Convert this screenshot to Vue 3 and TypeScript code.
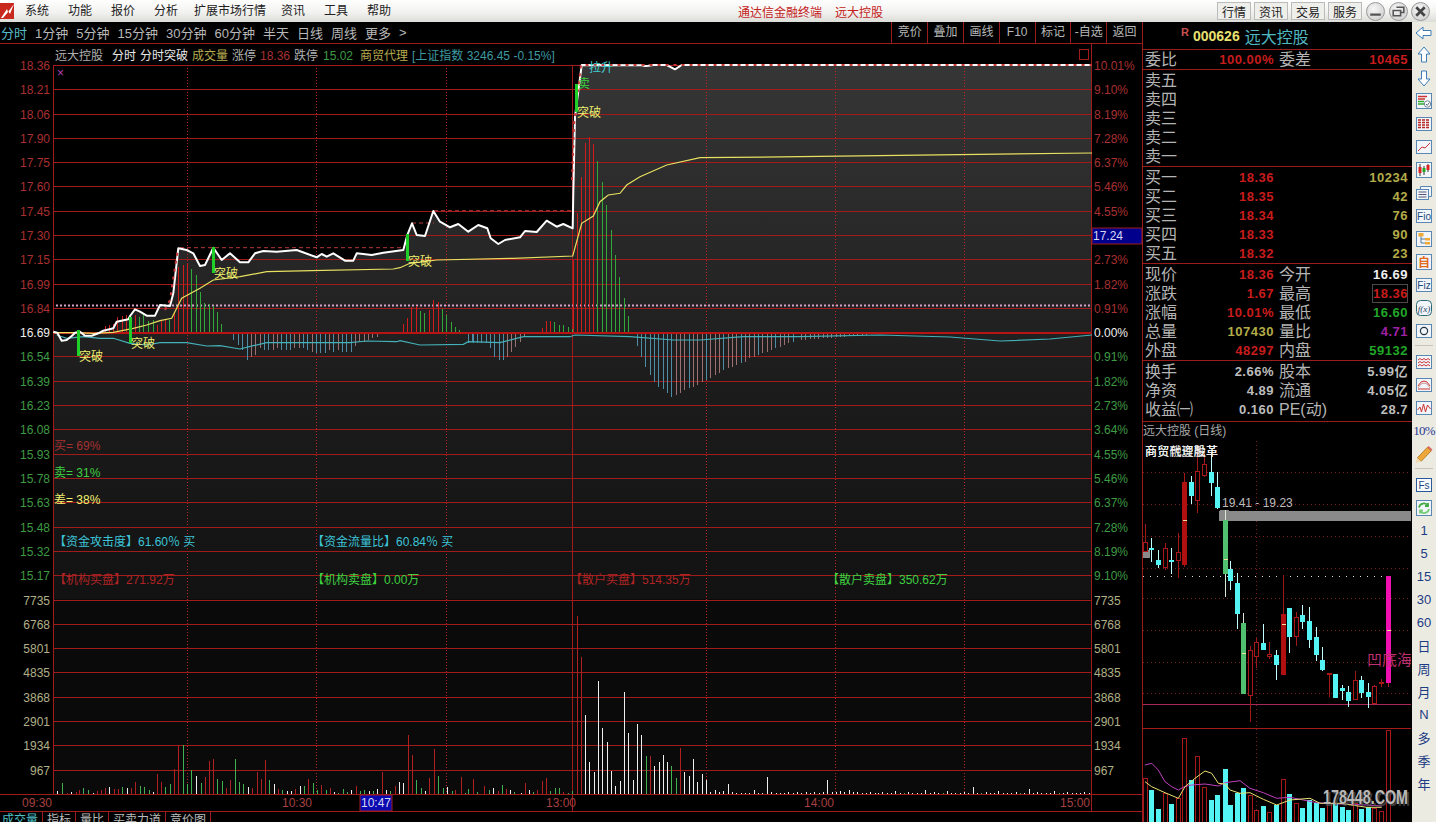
<script setup lang="ts">
type P = [number, number];
type Col = "r" | "g" | "w";
type VolBar = { x: number; top: number; c: Col };

const z5 = (p: P): P => [p[0] / 3, 200 + p[1] / 3];
const z6 = (p: P): P => [400 + p[0] / 3, 50 + p[1] / 3];
const path = (pts: P[]) => pts.map((p, i) => `${i ? "L" : "M"}${p[0].toFixed(1)} ${p[1].toFixed(1)}`).join(" ");
const snap = (x: number) => Math.round(x) + 0.5;

const menus = ["系统", "功能", "报价", "分析", "扩展市场行情", "资讯", "工具", "帮助"];
const periods = ["分时", "1分钟", "5分钟", "15分钟", "30分钟", "60分钟", "半天", "日线", "周线", "更多", ">"];
const tools = ["竞价", "叠加", "画线", "F10", "标记", "-自选", "返回"];
const tabs = ["成交量", "指标", "量比", "买卖力道", "竞价图"];

const step = 24.29;
const priceLabels = ["18.36","18.21","18.06","17.90","17.75","17.60","17.45","17.30","17.15","16.99","16.84","16.69","16.54","16.39","16.23","16.08","15.93","15.78","15.63","15.48","15.32","15.17"];
const pctLabels = ["10.01%","9.10%","8.19%","7.28%","6.37%","5.46%","4.55%","","2.73%","1.82%","0.91%","0.00%","0.91%","1.82%","2.73%","3.64%","4.55%","5.46%","6.37%","7.28%","8.19%","9.10%"];
const priceRows = priceLabels.map((label, i) => ({
  label,
  pct: pctLabels[i],
  y: 65 + i * step,
  cls: i < 11 ? "up" : i === 11 ? "flat" : "down",
}));
const volRows = ["7735","6768","5801","4835","3868","2901","1934","967"].map((label, i) => ({ label, y: 599.5 + i * 24.3 }));
const vDots = [187.5, 316.5, 446.5, 706.5, 835.5, 964.5];
const times = [
  { t: "09:30", x: 22 }, { t: "10:30", x: 282 }, { t: "13:00", x: 546 }, { t: "14:00", x: 804 }, { t: "15:00", x: 1060 },
];

const priceLine: P[] = [
  ...([[160,395],[172,398],[185,422],[200,420],[215,408],[225,398],[240,395],[255,407],[275,407],[295,400],[310,392],[340,385],[350,365],[385,358],[392,345],[405,328],[420,335],[440,347],[465,347],[480,315],[510,318],[520,280],[535,145],[560,150],[580,160],[600,198],[615,195],[640,143],[665,180],[690,160],[720,187],[745,187],[765,160],[790,153],[830,155],[890,150],[950,172],[965,162],[980,170],[1000,160],[1035,182],[1060,182],[1070,160],[1115,165],[1150,158],[1210,150]] as P[]).map(z5),
  ...([[22,555],[36,520],[50,555],[75,558],[100,483],[120,515],[150,532],[175,522],[205,545],[235,525],[262,535],[272,565],[295,582],[315,570],[360,562],[375,543],[410,546],[440,512],[470,530],[490,522],[518,535],[520,430],[525,200],[545,45],[725,46],[735,48],[745,47],[760,45],[800,45],[825,58],[845,45],[1200,45]] as P[]).map(z6),
  [1092, 65],
];
const pricePath = path(priceLine);
const areaPath = `${pricePath} L1092 599 L53 599 Z`;

const avgLine = path([
  ...([[160,398],[230,398],[280,400],[340,397],[400,385],[440,375],[480,362],[515,355],[545,295],[600,265],[640,240],[720,230],[800,215],[935,212],[1180,207],[1200,203]] as P[]).map(z5),
  ...([[30,640],[110,630],[340,625],[518,618],[545,520],[580,498],[600,455],[625,435],[660,430],[680,405],[720,380],[800,345],[900,323],[1200,320]] as P[]).map(z6),
  [1092, 153],
]);
const cyanLine = path([
  ...([[170,405],[200,415],[250,410],[300,415],[340,415],[390,430],[440,435],[480,428],[560,428],[620,438],[660,437],[720,447],[760,437],[800,428],[1050,428],[1100,423],[1190,425]] as P[]).map(z5),
  ...([[0,872],[60,885],[190,883],[205,875],[300,878],[370,860],[510,860],[525,855],[690,860],[820,870],[900,870],[1030,860],[1200,860]] as P[]).map(z6),
  [880, 335], [950, 337], [1000, 341], [1050, 339], [1092, 335],
]);

type Bar = { x: number; y1: number; y2: number; cls: string };
const zero = 333;
const upBars: Bar[] = [];
const addUp = (zp: (p: P) => P, list: [number, number, string][]) =>
  list.forEach(([x, y, c]) => {
    const p = zp([x, y]);
    upBars.push({ x: snap(p[0]), y1: zero, y2: p[1], cls: c === "r" ? "bar-red" : "bar-green" });
  });
addUp(z5, [[315,378,"r"],[328,375,"r"],[340,372,"r"],[352,350,"r"],[365,347,"r"],[378,345,"r"],[405,345,"r"],[418,350,"g"],[430,345,"g"],[445,362,"g"],[460,360,"g"],[470,375,"r"],[483,360,"r"],[496,360,"r"],[508,360,"g"],[522,340,"r"],[535,200,"r"],[548,195,"r"],[561,190,"r"],[574,207,"g"],[587,225,"g"],[600,275,"g"],[613,310,"g"],[626,312,"g"],[640,318,"g"],[652,335,"g"],[664,372,"g"],[1208,372,"r"],[1221,355,"r"],[1234,320,"r"],[1247,318,"r"],[1260,333,"g"],[1273,340,"g"],[1287,330,"r"],[1300,300,"r"],[1313,305,"r"],[1326,328,"g"],[1339,345,"g"],[1352,365,"g"],[1365,380,"g"],[1378,390,"g"]]);
addUp(z6, [[425,835,"r"],[438,812,"r"],[451,812,"r"],[463,816,"g"],[477,825,"g"],[490,825,"g"],[503,832,"g"],[516,838,"g"],[518,630,"r"],[531,490,"r"],[542,380,"r"],[555,280,"r"],[568,262,"r"],[580,282,"r"],[592,332,"g"],[606,395,"g"],[619,465,"g"],[632,540,"g"],[646,615,"g"],[658,680,"g"],[671,745,"g"],[685,798,"g"]]);

const downBars: Bar[] = [];
const firstDown: [number, number, string][] = [[700,420,"b"],[715,435,"b"],[727,450,"b"],[740,480,"b"],[753,470,"p"],[766,465,"p"],[779,445,"p"],[792,450,"b"],[805,450,"b"],[818,450,"p"],[831,445,"p"],[844,450,"b"],[857,450,"b"],[870,450,"b"],[883,445,"p"],[896,445,"p"],[909,445,"b"],[922,450,"b"],[935,455,"p"],[948,460,"b"],[961,458,"b"],[974,458,"b"],[987,450,"p"],[1000,455,"b"],[1013,450,"p"],[1026,455,"b"],[1039,455,"b"],[1052,455,"b"],[1065,437,"p"],[1078,425,"p"],[1091,425,"p"],[1104,420,"p"],[1117,415,"p"],[1130,410,"p"],[1404,425,"b"],[1417,425,"b"],[1430,425,"b"]];
firstDown.forEach(([x, y, c]) => {
  const p = z5([x, y]);
  downBars.push({ x: snap(p[0]), y1: zero + 1, y2: p[1], cls: c === "b" ? "bar-blue" : "bar-pink" });
});
const midDown: [number, number, string][] = [[205,880,"b"],[218,880,"b"],[231,880,"b"],[244,880,"b"],[257,880,"b"],[270,895,"b"],[283,920,"b"],[296,930,"b"],[309,930,"b"],[320,920,"p"],[333,905,"p"],[346,890,"p"],[360,875,"p"],[373,860,"p"],[710,888,"b"],[723,920,"b"],[736,950,"b"],[749,975,"b"],[762,995,"b"],[775,1010,"b"],[788,1018,"b"],[801,1030,"b"],[814,1040,"b"]];
midDown.forEach(([x, y, c]) => {
  const p = z6([x, y]);
  downBars.push({ x: snap(p[0]), y1: zero + 1, y2: p[1], cls: c === "b" ? "bar-blue" : "bar-pink" });
});
[1035,1030,1020,1015,1010,1005,995,990,985,975,970,960,955,950,945,940,935,925,920,915,910,905,900,895,890,885,880,875].forEach((y, i) => {
  const p = z6([827 + i * 13, y]);
  downBars.push({ x: snap(p[0]), y1: zero + 1, y2: p[1], cls: i % 4 === 3 ? "bar-blue" : "bar-pink" });
});
[6, 6, 5, 5, 5, 4, 4, 4, 3, 3, 3, 2, 2, 2, 1, 1].forEach((d, i) => {
  downBars.push({ x: snap(801 + i * 4.33), y1: zero + 1, y2: zero + 1 + d, cls: "bar-pink" });
});

const volBars: VolBar[] = [];
const z7: [number, number, Col][] = [[172,272,"w"],[187,250,"g"],[200,278,"r"],[212,276,"w"],[227,275,"r"],[238,270,"r"],[250,265,"g"],[265,270,"g"],[278,278,"w"],[290,273,"r"],[303,270,"r"],[316,265,"r"],[328,262,"w"],[343,268,"r"],[355,266,"r"],[367,262,"g"],[382,264,"w"],[394,265,"r"],[406,247,"r"],[421,258,"g"],[433,262,"g"],[446,270,"g"],[458,276,"w"],[472,222,"r"],[484,247,"r"],[496,262,"g"],[511,252,"g"],[523,208,"r"],[535,137,"r"],[550,135,"g"],[562,252,"g"],[574,210,"g"],[589,228,"w"],[602,250,"g"],[614,232,"r"],[628,183,"r"],[640,178,"r"],[652,238,"g"],[667,243,"g"],[679,265,"r"],[691,240,"r"],[706,178,"g"],[718,247,"g"],[730,252,"g"],[745,260,"w"],[757,265,"r"],[770,217,"r"],[784,238,"r"],[796,181,"r"],[808,240,"g"],[823,252,"w"],[835,266,"r"],[847,270,"g"],[862,274,"w"],[874,272,"w"],[886,266,"r"],[901,258,"w"],[913,258,"g"],[925,238,"r"],[940,250,"g"],[952,270,"g"],[964,254,"r"],[977,270,"g"],[991,265,"r"],[1003,277,"w"],[1015,279,"g"],[1030,267,"g"],[1042,276,"g"],[1054,270,"w"],[1069,258,"r"],[1081,273,"g"],[1093,270,"g"],[1108,274,"w"],[1120,273,"g"],[1132,266,"w"],[1147,217,"r"],[1159,270,"w"],[1171,274,"g"],[1186,258,"r"],[1198,246,"w"],[1210,248,"w"],[1225,105,"r"],[1237,165,"r"],[1249,240,"g"],[1264,264,"g"],[1276,273,"w"],[1288,235,"r"],[1303,148,"r"],[1315,228,"g"],[1328,263,"g"],[1342,261,"w"],[1355,273,"g"],[1366,270,"r"],[1382,232,"r"],[1394,278,"g"],[1405,267,"g"],[1419,237,"r"],[1431,277,"g"]];
z7.forEach(([x, y, c]) => volBars.push({ x: x / 3, top: 700 + y / 3, c }));
([[484,786,"r"],[489,790,"g"],[493,788,"w"],[498,791,"r"],[502,785,"g"],[506,789,"r"],[510,790,"w"],[514,792,"g"]] as [number, number, Col][]).forEach(([x, top, c]) => volBars.push({ x, top, c }));
const z8: [number, number, Col][] = [[2,578,"w"],[14,550,"r"],[28,570,"w"],[40,576,"g"],[52,571,"r"],[67,543,"r"],[79,534,"r"],[91,573,"g"],[106,564,"g"],[118,564,"g"],[130,577,"r"],[144,579,"g"],[157,573,"g"],[170,48,"r"],[184,172,"r"],[196,345,"w"],[208,486,"w"],[223,516,"w"],[235,243,"w"],[247,385,"w"],[262,427,"w"],[274,513,"w"],[286,558,"w"],[301,543,"w"],[313,276,"w"],[325,399,"w"],[340,540,"w"],[352,372,"w"],[364,405,"w"],[379,468,"g"],[391,468,"r"],[403,498,"w"],[418,486,"w"],[430,465,"w"],[442,486,"w"],[454,498,"g"],[469,534,"g"],[481,444,"r"],[493,516,"w"],[508,528,"w"],[520,477,"w"],[532,546,"w"],[547,522,"w"],[559,540,"w"],[571,576,"w"],[586,570,"w"],[598,576,"w"],[610,573,"w"],[625,552,"w"],[637,576,"w"],[649,579,"w"],[664,579,"w"],[676,579,"w"],[688,579,"w"],[703,570,"w"],[715,579,"w"],[727,579,"w"],[742,531,"w"],[754,576,"w"],[769,579,"w"],[781,579,"w"],[793,579,"w"],[805,576,"w"],[820,579,"w"],[832,576,"w"],[844,579,"w"],[859,576,"w"],[871,579,"w"],[883,576,"w"],[898,579,"w"],[910,576,"w"],[922,540,"w"],[937,576,"w"],[949,576,"w"],[961,573,"w"],[973,576,"w"],[988,570,"w"],[1000,576,"w"],[1012,576,"w"],[1027,579,"w"],[1039,579,"w"],[1051,576,"w"],[1066,579,"w"]];
z8.forEach(([x, y, c]) => volBars.push({ x: 520 + x / 3, top: 600 + y / 3, c }));
const tailH = [1,2,1,1,3,1,1,2,1,1,1,4,1,2,1,1,3,1,1,1,2,1,7,1,1,2,1,1,3,1,1,1,2,1,1,5,1,2,1,1,1,3,1,1,2,1,1,1,2,1];
for (let i = 0; i < tailH.length; i++) {
  volBars.push({ x: 878 + i * 4.3, top: 794 - tailH[i], c: i % 9 === 6 ? "g" : "w" });
}
const volView = volBars.map((b) => ({ x: snap(b.x), top: b.top, cls: `vol-${b.c}` }));

const marks = [
  { x: 78, y1: 330, y2: 356 }, { x: 130, y1: 317, y2: 343 }, { x: 213, y1: 247, y2: 273 }, { x: 407, y1: 234, y2: 261 }, { x: 576, y1: 84, y2: 112 },
];

const asks = ["卖五", "卖四", "卖三", "卖二", "卖一"];
const bids = [
  { l: "买一", p: "18.36", v: "10234" }, { l: "买二", p: "18.35", v: "42" }, { l: "买三", p: "18.34", v: "76" }, { l: "买四", p: "18.33", v: "90" }, { l: "买五", p: "18.32", v: "23" },
];
const stats = [
  { a: "现价", b: "18.36", bc: "red", c: "今开", d: "16.69", dc: "white" },
  { a: "涨跌", b: "1.67", bc: "red", c: "最高", d: "18.36", dc: "red boxed" },
  { a: "涨幅", b: "10.01%", bc: "red", c: "最低", d: "16.60", dc: "green" },
  { a: "总量", b: "107430", bc: "yellow", c: "量比", d: "4.71", dc: "purple" },
  { a: "外盘", b: "48297", bc: "red", c: "内盘", d: "59132", dc: "green" },
];
const extra = [
  { a: "换手", b: "2.66%", c: "股本", d: "5.99亿" },
  { a: "净资", b: "4.89", c: "流通", d: "4.05亿" },
  { a: "收益㈠", b: "0.160", c: "PE(动)", d: "28.7" },
];

type Candle = [number, number, number, number, number, string, number?];
const candleData: Candle[] = [
  [15,312,366,392,392,"h"],[34,354,384,387,426,"c"],[55,390,420,432,445,"c"],[74,370,385,443,450,"h"],[94,385,420,423,462,"c"],[115,340,397,420,475,"h"],[133,160,187,433,440,"s",300],[154,168,186,225,252,"c"],[172,80,154,241,278,"h"],[193,100,132,165,170,"h"],[212,100,157,186,228,"c"],[232,155,201,260,268,"c"],[254,270,300,460,530,"g",418],[271,424,448,480,510,"c"],[292,460,489,578,628,"c"],[310,580,609,820,820,"g",700],[331,678,690,824,905,"h"],[349,655,667,710,745,"h"],[370,612,670,688,690,"c"],[388,667,703,710,718,"h"],[409,690,705,732,780,"c"],[430,465,582,762,762,"s",612],[448,564,564,648,698,"c"],[469,575,592,650,678,"h"],[487,555,585,603,627,"c"],[508,560,603,656,685,"c"],[527,620,651,702,722,"c"],[547,680,720,748,752,"c"],[566,758,760,764,830,"h"],[586,762,762,832,835,"c"],[606,795,803,808,840,"c"],[625,797,816,840,860,"c"],[646,752,780,838,840,"h"],[664,767,780,815,833,"c"],[685,790,816,828,865,"c"],[703,795,798,850,850,"h"],[724,778,785,787,802,"h"],[745,468,468,785,800,"m",632],
];
const kx = (z: number) => snap(1140 + z / 3);
const ky = (z: number) => 420 + z / 3;
const candles = candleData.map(([x, wt, bt, bb, wb, k, tick]) => ({
  x: kx(x), wt: ky(wt), bt: ky(bt), bb: ky(bb), wb: ky(wb), k, tick: tick ? ky(tick) : 0,
}));
const kVols: [number, number, number][] = [[15,1075,0],[34,1110,1],[55,1167,1],[74,1120,0],[94,1152,1],[115,1135,0],[133,955,0],[154,1080,1],[172,1008,0],[193,1100,0],[212,1140,1],[232,1125,1],[254,1047,1],[271,1155,1],[292,1120,1],[310,1105,1],[331,1125,0],[349,1170,0],[370,1158,1],[388,1175,0],[409,1155,1],[430,1078,0],[448,1122,1],[469,1150,0],[487,1163,1],[508,1140,1],[527,1150,1],[547,1163,1],[566,1150,0],[586,1150,1],[606,1160,1],[625,1170,1],[646,1150,0],[664,1167,1],[685,1160,1],[703,1165,0],[724,1172,0],[745,930,0]];
const kVolBars = kVols.map(([x, t, c]) => ({ x: kx(x), top: ky(t), cy: c === 1 }));
const kz = (pts: P[]) => path(pts.map((p) => [1140 + p[0] / 3, 420 + p[1] / 3] as P));
const kPurple = kz([[15,1035],[35,1030],[55,1050],[75,1085],[95,1100],[115,1110],[133,1100],[155,1095],[195,1092],[235,1098],[255,1088],[300,1082],[330,1105],[370,1118],[410,1135],[450,1132],[490,1140],[530,1148],[600,1152],[680,1155],[725,1158]]);
const kYellow = kz([[15,1085],[35,1100],[75,1118],[115,1135],[135,1100],[165,1075],[195,1053],[215,1060],[235,1090],[255,1092],[270,1110],[300,1120],[330,1118],[370,1138],[410,1155],[450,1140],[510,1135],[540,1150],[600,1150],[680,1162],[725,1162]]);
const kDots = [472, 504, 536, 568, 598, 630, 662, 693];
</script>

<template>
  <div class="app">
    <header class="menubar">
      <svg class="logo" viewBox="0 0 15 18" width="15" height="18">
        <rect x="0" y="1" width="14" height="16" fill="#c8281e" />
        <path d="M1 16 L7 7 L8 10 L14 2 L10 12 L8.5 9.5 L3 16 Z" fill="#fff" />
      </svg>
      <nav class="menus">
        <span v-for="m in menus" :key="m">{{ m }}</span>
      </nav>
      <div class="title">
        <span>通达信金融终端</span>
        <span>远大控股</span>
      </div>
      <div class="winbtns">
        <button v-for="b in ['行情', '资讯', '交易', '服务']" :key="b">{{ b }}</button>
      </div>
      <div class="circles">
        <i class="circle"><svg viewBox="0 0 18 18" width="19" height="19"><path d="M4 12 H14" stroke="#555" stroke-width="2" /></svg></i>
        <i class="circle"><svg viewBox="0 0 18 18" width="19" height="19"><path d="M7 5 H14 V10 H11 M4 8 H11 V13 H4 Z" stroke="#555" stroke-width="1.5" fill="none" /></svg></i>
        <i class="circle"><svg viewBox="0 0 18 18" width="19" height="19"><path d="M5 5 L13 13 M13 5 L5 13" stroke="#444" stroke-width="2.6" /></svg></i>
      </div>
    </header>

    <div class="body">
      <main class="main">
        <div class="periodbar">
          <span v-for="(p, i) in periods" :key="p" :class="{ active: i === 0 }">{{ p }}</span>
          <div class="tools">
            <span v-for="t in tools" :key="t">{{ t }}</span>
          </div>
        </div>

        <svg class="chart" width="1142" height="768" viewBox="0 44 1142 768">
          <defs>
            <linearGradient id="areaFill" gradientUnits="userSpaceOnUse" x1="0" y1="65" x2="0" y2="599">
              <stop offset="0" stop-color="#363636" />
              <stop offset="0.6" stop-color="#1c1c1c" />
              <stop offset="1" stop-color="#121212" />
            </linearGradient>
          </defs>
          <rect x="53" y="599" width="1039" height="196" fill="#0a0a0a" />
          <path :d="areaPath" fill="url(#areaFill)" />

          <g class="info">
            <text x="55" y="60" class="t-gray">远大控股</text>
            <text x="112" y="60" class="t-white">分时</text>
            <text x="140" y="60" class="t-white">分时突破</text>
            <text x="192" y="60" class="t-khaki">成交量</text>
            <text x="232" y="60" class="t-gray">涨停</text>
            <text x="260" y="60" class="up">18.36</text>
            <text x="294" y="60" class="t-gray">跌停</text>
            <text x="323" y="60" class="down">15.02</text>
            <text x="360" y="60" class="t-khaki">商贸代理</text>
            <text x="412" y="60" class="t-teal">[上证指数 3246.45 -0.15%]</text>
          </g>
          <rect x="1079.5" y="49.5" width="9" height="10" class="hollow" />
          <text x="57" y="77" class="t-purple">×</text>

          <line v-for="v in vDots" :key="v" :x1="v" :x2="v" y1="65" y2="795" class="vdot" />
          <line x1="572.5" x2="572.5" y1="65" y2="812" class="grid" />
          <line v-for="r in priceRows" :key="r.label" x1="53" x2="1092" :y1="Math.round(r.y) + 0.5" :y2="Math.round(r.y) + 0.5" class="grid" />
          <line v-for="r in volRows" :key="r.label" x1="53" x2="1092" :y1="Math.round(r.y) + 0.5" :y2="Math.round(r.y) + 0.5" class="grid" />
          <line x1="0" x2="1142" y1="794.5" y2="794.5" class="grid" />
          <line x1="0" x2="1142" y1="811.5" y2="811.5" class="grid" />
          <line x1="53.5" x2="53.5" y1="65" y2="795" class="grid" />
          <line x1="1091.5" x2="1091.5" y1="44" y2="812" class="grid" />

          <line x1="56" x2="1092" y1="305.5" y2="305.5" class="pinkdots" />
          <path d="M180 247.7 H405 M412 223 H434 M434 210.7 H572" class="dash-high" />
          <line v-for="(b, i) in upBars" :key="'u' + i" :x1="b.x" :x2="b.x" :y1="b.y1" :y2="b.y2" :class="b.cls" />
          <line v-for="(b, i) in downBars" :key="'d' + i" :x1="b.x" :x2="b.x" :y1="b.y1" :y2="b.y2" :class="b.cls" />
          <line x1="54" x2="1091" y1="333" y2="333" class="zero" />
          <path :d="cyanLine" class="line-cyan" />
          <path :d="avgLine" class="line-avg" />
          <path :d="pricePath" class="line-price" />
          <path d="M165 310 L170 300 L173 280 L178 249 M572 180 L574 125 L581 65 H1092" class="line-price-dash" />

          <rect v-for="m in marks" :key="m.x" :x="m.x - 1" :y="m.y1" width="3" :height="m.y2 - m.y1" class="mark" />
          <g class="t13">
            <text x="79" y="361" class="t-yellow">突破</text>
            <text x="131" y="348" class="t-yellow">突破</text>
            <text x="214" y="278" class="t-yellow">突破</text>
            <text x="408" y="266" class="t-yellow">突破</text>
            <text x="577" y="117" class="t-yellow">突破</text>
            <text x="578" y="88" class="t-lime">卖</text>
            <text x="589" y="72" class="t-cyan">拉升</text>
          </g>

          <rect x="1092" y="228" width="50" height="16" class="last-box" />

          <g class="axis">
            <template v-for="r in priceRows" :key="r.label">
              <text x="50" :y="r.y + 5" text-anchor="end" :class="r.cls">{{ r.label }}</text>
              <text v-if="r.pct" x="1094" :y="r.y + 5" :class="r.cls">{{ r.pct }}</text>
            </template>
            <text x="1093" y="240" class="t-box">17.24</text>
            <template v-for="r in volRows" :key="r.label">
              <text x="50" :y="r.y + 5" text-anchor="end" class="t-vol">{{ r.label }}</text>
              <text x="1094" :y="r.y + 5" class="t-vol">{{ r.label }}</text>
            </template>
          </g>

          <line v-for="(b, i) in volView" :key="'v' + i" :x1="b.x" :x2="b.x" y1="794" :y2="b.top" :class="b.cls" />

          <g class="overlay">
            <text x="54" y="450" class="up">买= 69%</text>
            <text x="54" y="477" class="t-lime">卖= 31%</text>
            <text x="54" y="504" class="t-yellow">差= 38%</text>
            <text x="54" y="546" class="t-sky">【资金攻击度】61.60％ 买</text>
            <text x="312" y="546" class="t-sky">【资金流量比】60.84％ 买</text>
            <text x="54" y="584" class="t-red">【机构买盘】271.92万</text>
            <text x="312" y="584" class="t-lime">【机构卖盘】0.00万</text>
            <text x="570" y="584" class="t-red">【散户买盘】514.35万</text>
            <text x="827" y="584" class="t-lime">【散户卖盘】350.62万</text>
          </g>

          <g class="axis">
            <text v-for="t in times" :key="t.t" :x="t.x" y="807" class="t-time">{{ t.t }}</text>
            <rect x="360" y="795" width="32" height="16" class="time-box" />
            <text x="361" y="807" class="t-box">10:47</text>
          </g>
        </svg>

        <div class="tabs">
          <span v-for="(t, i) in tabs" :key="t" :class="{ active: i === 0 }">{{ t }}</span>
        </div>
      </main>

      <aside class="quote">
        <div class="q-head">
          <span class="q-r">R</span>
          <span class="q-code">000626</span>
          <span class="q-name">远大控股</span>
        </div>
        <div class="q-row q-single">
          <span class="lbl">委比</span><b class="red">100.00%</b><span class="lbl">委差</span><b class="red">10465</b>
        </div>
        <div class="q-block">
          <div v-for="a in asks" :key="a" class="q-row"><span class="lbl">{{ a }}</span></div>
        </div>
        <div class="q-block">
          <div v-for="r in bids" :key="r.l" class="q-row">
            <span class="lbl">{{ r.l }}</span><b class="red">{{ r.p }}</b><span></span><b class="yellow">{{ r.v }}</b>
          </div>
        </div>
        <div class="q-block">
          <div v-for="r in stats" :key="r.a" class="q-row">
            <span class="lbl">{{ r.a }}</span><b :class="r.bc">{{ r.b }}</b>
            <span class="lbl">{{ r.c }}</span><b :class="r.dc">{{ r.d }}</b>
          </div>
        </div>
        <div class="q-block q-extra">
          <div v-for="r in extra" :key="r.a" class="q-row">
            <span class="lbl nowrap">{{ r.a }}</span><b class="gray">{{ r.b }}</b>
            <span class="lbl nowrap">{{ r.c }}</span><b class="gray">{{ r.d }}</b>
          </div>
        </div>
        <div class="q-title">远大控股 (日线)</div>

        <svg class="kchart" width="268" height="381" viewBox="1143 441 268 381">
          <line v-for="y in kDots" :key="y" x1="1143" x2="1411" :y1="y + 0.5" :y2="y + 0.5" class="kdot" />
          <line x1="1256.5" x2="1256.5" y1="441" y2="822" class="kdot" />
          <line x1="1143" x2="1388" y1="576.5" y2="576.5" class="kwhite" />
          <line x1="1143" x2="1411" y1="704.5" y2="704.5" class="kmag" />
          <line x1="1143" x2="1411" y1="728.5" y2="728.5" class="grid" />
          <rect x="1143" y="550" width="7" height="8" class="kgray" />
          <rect x="1219" y="511" width="193" height="10" class="kgray" />
          <rect x="1220" y="510" width="9" height="2" class="kgray" />

          <g v-for="(c, i) in candles" :key="'c' + i">
            <line :x1="c.x" :x2="c.x" :y1="c.wt" :y2="c.wb" :class="'wick-' + c.k" />
            <rect :x="c.x - 2" :y="Math.round(c.bt) + 0.5" width="4" :height="Math.max(1, Math.round(c.bb - c.bt))" :class="'body-' + c.k" />
            <line v-if="c.tick" :x1="c.x - 2" :x2="c.x + 2" :y1="c.tick" :y2="c.tick" class="tick" />
          </g>

          <g v-for="(v, i) in kVolBars" :key="'kv' + i">
            <rect :x="v.x - 2" :y="Math.round(v.top) + 0.5" width="4" :height="822 - Math.round(v.top)" :class="v.cy ? 'body-c' : 'body-h'" />
          </g>
          <path :d="kPurple" class="k-purple" />
          <path :d="kYellow" class="k-yellow" />

          <text x="1222" y="507" class="k-range">19.41 - 19.23</text>
          <text x="1367" y="665" class="k-pink">凹底海</text>
          <text x="1145" y="456" class="k-notice">商贸融资融革</text>
          <text x="1145" y="456" class="k-notice">商贸代理股革</text>
          <text x="1325" y="806" textLength="85" lengthAdjust="spacingAndGlyphs" class="k-mark-shadow">178448.COM</text>
          <text x="1323" y="804" textLength="85" lengthAdjust="spacingAndGlyphs" class="k-mark">178448.COM</text>
        </svg>
      </aside>

      <aside class="side">
        <div class="it first"><svg viewBox="0 0 18 18" width="18" height="18"><path d="M1 9 L8 3 V6.5 H16 V11.5 H8 V15 Z" class="arrow" /></svg></div>
        <div class="it"><svg viewBox="0 0 18 18" width="18" height="18"><path d="M9 1 L15 8 H11.5 V16 H6.5 V8 H3 Z" class="arrow" /></svg></div>
        <div class="it"><svg viewBox="0 0 18 18" width="18" height="18"><path d="M9 17 L15 10 H11.5 V2 H6.5 V10 H3 Z" class="arrow" /></svg></div>
        <div class="it"><svg viewBox="0 0 18 18" width="18" height="18"><rect x="1.5" y="1.5" width="15" height="15" class="box" /><path d="M3 4.5 H12 M3 7 H10" stroke="#c33" stroke-width="1.4" /><path d="M3 9.5 H9 M3 12 H9" stroke="#3a3" stroke-width="1.4" /><circle cx="12.5" cy="12" r="3.2" fill="#fff" stroke="#789" /><path d="M11 12 L12.3 13.4 L14.3 10.6" stroke="#567" fill="none" /></svg></div>
        <div class="it"><svg viewBox="0 0 18 18" width="18" height="18"><rect x="1.5" y="2.5" width="15" height="13" class="box" /><path d="M3 5 H15 M3 7.5 H15 M3 10 H15 M3 12.5 H15" stroke="#b22" stroke-width="1.3" stroke-dasharray="3 1" /></svg></div>
        <div class="it"><svg viewBox="0 0 18 18" width="18" height="18"><rect x="1.5" y="2.5" width="15" height="13" class="box" /><path d="M3 13 L7 9 L10 10 L15 5" stroke="#c33" fill="none" /></svg></div>
        <div class="it"><svg viewBox="0 0 18 18" width="18" height="18"><rect x="1.5" y="1.5" width="15" height="15" class="box" /><path d="M5 3 V15 M13 3 V11 M9 5 V14" stroke="#333" /><rect x="3.5" y="6" width="3" height="6" fill="#d22" /><rect x="7.5" y="7" width="3" height="4" fill="#2a2" /><rect x="11.5" y="4" width="3" height="5" fill="#d22" /></svg></div>
        <div class="it"><svg viewBox="0 0 18 18" width="18" height="18"><path d="M5.5 5.5 V2.5 H16.5 V12.5 H13.5" class="box" fill="none" /><rect x="1.5" y="5.5" width="12" height="10" class="box" /><path d="M3.5 8 H11.5 M3.5 10.5 H11.5 M3.5 13 H11.5" stroke="#557" /></svg></div>
        <div class="it"><svg viewBox="0 0 18 18" width="18" height="18"><rect x="1.5" y="2.5" width="15" height="13" class="box" /><text x="9" y="13" text-anchor="middle" class="ic-t">Fio</text></svg></div>
        <div class="it"><svg viewBox="0 0 18 18" width="18" height="18"><rect x="1.5" y="1.5" width="15" height="15" class="box" /><rect x="3.5" y="3" width="5" height="3.5" fill="#ea3" /><rect x="10" y="8" width="5" height="2.5" fill="#ea3" /><rect x="10" y="12" width="5" height="2.5" fill="#ea3" /><path d="M6 6.5 V13 H10 M6 9 H10" stroke="#579" fill="none" /></svg></div>
        <div class="it"><svg viewBox="0 0 18 18" width="18" height="18"><rect x="1.5" y="1.5" width="15" height="15" class="box" /><text x="9" y="14" text-anchor="middle" class="ic-cjk">自</text></svg></div>
        <div class="it"><svg viewBox="0 0 18 18" width="18" height="18"><rect x="1.5" y="2.5" width="15" height="13" class="box" /><text x="9" y="13" text-anchor="middle" class="ic-t">Fiz</text></svg></div>
        <div class="it"><svg viewBox="0 0 18 18" width="18" height="18"><rect x="1.5" y="1.5" width="15" height="15" rx="4" class="box box-teal" /><text x="9" y="13" text-anchor="middle" class="ic-fx">f(x)</text></svg></div>
        <div class="it"><svg viewBox="0 0 18 18" width="18" height="18"><rect x="1.5" y="2.5" width="15" height="13" class="box" /><circle cx="9" cy="9" r="3.6" fill="none" stroke="#234" stroke-width="1.2" /></svg></div>
        <div class="sep"></div>
        <div class="it"><svg viewBox="0 0 18 18" width="18" height="18"><rect x="1.5" y="2.5" width="15" height="13" class="box" /><path d="M3 7 L5 5.5 L7 7 L9 5.5 L11 7 L13 5.5 L15 7 M3 10 L5 8.5 L7 10 L9 8.5 L11 10 L13 8.5 L15 10 M3 13 L5 11.5 L7 13 L9 11.5 L11 13 L13 11.5 L15 13" stroke="#c33" fill="none" /></svg></div>
        <div class="it"><svg viewBox="0 0 18 18" width="18" height="18"><rect x="1.5" y="2.5" width="15" height="13" class="box" /><path d="M3 10 L6 6 L9 5 L12 6 L15 10 M3 13 H15" stroke="#c33" fill="none" /><path d="M3 12 L6 8 L9 7 L12 8 L15 12" stroke="#c99" fill="none" /></svg></div>
        <div class="it"><svg viewBox="0 0 18 18" width="18" height="18"><rect x="1.5" y="2.5" width="15" height="13" class="box" /><path d="M2.5 11 L5 8 L6.5 13 L8.5 5 L10.5 13 L12.5 6 L15.5 10" stroke="#c33" fill="none" /></svg></div>
        <div class="it text pct">10%</div>
        <div class="it"><svg viewBox="0 0 18 18" width="20" height="20"><path d="M3 12.5 L12 3 L15.5 6.2 L6.5 15.5 Z" fill="#eea83a" stroke="#a8701e" stroke-width="0.7" /><path d="M3 12.5 L1.5 17 L6.5 15.5 Z" fill="#f3d6a8" /><path d="M12 3 L15.5 6.2 L16.6 5 L13.2 1.8 Z" fill="#d66" /></svg></div>
        <div class="sep"></div>
        <div class="it"><svg viewBox="0 0 18 18" width="18" height="18"><rect x="1.5" y="2.5" width="15" height="13" class="box box-strong" /><text x="9" y="13" text-anchor="middle" class="ic-t">Fs</text></svg></div>
        <div class="it"><svg viewBox="0 0 18 18" width="18" height="18"><rect x="1.5" y="1.5" width="15" height="15" class="box" /><path d="M4 8.5 A5 5 0 0 1 13 6.5 M13 4 V7 H10" stroke="#4a4" stroke-width="1.8" fill="none" /><path d="M14 10 A5 5 0 0 1 5 12 M5 14.5 V11.5 H8" stroke="#7c7" stroke-width="1.8" fill="none" /></svg></div>
        <div v-for="s in ['1', '5', '15', '30', '60', '日', '周', '月', 'N', '多', '季', '年']" :key="s" class="it text">{{ s }}</div>
      </aside>
    </div>
  </div>
</template>

<style>
html, body { margin: 0; background: #000; overflow: hidden; }
</style>

<style scoped>
.app {
  width: 1436px;
  height: 822px;
  overflow: hidden;
  background: #000;
  font-family: "Liberation Sans", "Noto Sans CJK SC", sans-serif;
  font-size: 12px;
  color: #bbb;
}
.menubar {
  height: 22px;
  display: flex;
  align-items: center;
  background: linear-gradient(#ffffff, #f2f2f0 55%, #dcdcd8);
  color: #222;
  position: relative;
}
.logo { flex: none; }
.menus { display: flex; gap: 19px; margin-left: 10px; width: 700px; flex: none; }
.menus span { line-height: 20px; white-space: nowrap; }
.menus span:nth-child(5) { margin-left: -3px; }
.menus span:nth-child(6) { margin-left: -4px; }
.title { display: flex; gap: 13px; color: #c42020; margin-left: 13px; }
.winbtns { display: flex; gap: 3px; margin-left: auto; }
.winbtns button {
  width: 34px;
  height: 18px;
  padding: 0;
  border: 1px solid #bbb;
  background: #eeeeea;
  font: 12px "Liberation Sans", "Noto Sans CJK SC", sans-serif;
  color: #222;
}
.circles { display: flex; gap: 3.5px; margin: 0 6px 0 4px; }
.circle {
  width: 19px;
  height: 19px;
  border-radius: 50%;
  border: 1px solid #999;
  background: radial-gradient(circle at 40% 35%, #f6f6f6, #c8c8c8);
  display: block;
  box-sizing: border-box;
  overflow: hidden;
}
.circle svg { display: block; margin: -1px; }

.body { display: flex; height: 800px; }
.main { width: 1142px; flex: none; }
.periodbar {
  height: 22px;
  box-sizing: border-box;
  border-bottom: 1px solid #9a1c1c;
  display: flex;
  align-items: center;
  gap: 8px;
  padding-left: 1px;
  font-size: 13px;
  color: #b8b8b8;
  white-space: nowrap;
}
.periodbar .active { color: #58bcc8; }
.tools { margin-left: auto; display: flex; height: 100%; }
.tools span {
  width: 35.8px;
  text-align: center;
  border-left: 1px solid #9a1c1c;
  box-sizing: border-box;
  line-height: 21px;
  font-size: 12px;
}
.chart { display: block; }
.tabs { height: 10px; overflow: hidden; display: flex; font-size: 12px; color: #bbb; }
.tabs span { padding: 1px 4px 0 4px; border-right: 1px solid #9a1c1c; line-height: 14px; white-space: nowrap; }
.tabs .active { color: #4fc0c8; padding-left: 2px; }

.grid { stroke: #a01c1c; stroke-width: 1; shape-rendering: crispEdges; }
.vdot { stroke: #c02424; stroke-width: 1; stroke-dasharray: 1 2; shape-rendering: crispEdges; }
.zero { stroke: #b81414; stroke-width: 2; shape-rendering: crispEdges; }
.pinkdots { stroke: #d8a0c8; stroke-width: 2; stroke-dasharray: 2 2; }
.dash-high { stroke: #b83838; stroke-width: 1; stroke-dasharray: 4 3; fill: none; }
.hollow { fill: none; stroke: #a01c1c; }
.bar-red { stroke: #d01c1c; shape-rendering: crispEdges; }
.bar-green { stroke: #30a83a; shape-rendering: crispEdges; }
.bar-blue { stroke: #4f8ca6; shape-rendering: crispEdges; }
.bar-pink { stroke: #9c7070; shape-rendering: crispEdges; }
.line-cyan { stroke: #44b0b8; stroke-width: 1.2; fill: none; }
.line-avg { stroke: #e8e060; stroke-width: 1.2; fill: none; }
.line-price { stroke: #fff; stroke-width: 2; fill: none; stroke-linejoin: round; }
.line-price-dash { stroke: #c83838; stroke-width: 2; stroke-dasharray: 3 5; fill: none; }
.mark { fill: #1fd028; }
.last-box { fill: #00008c; stroke: #a01c1c; }
.time-box { fill: #0a0ab0; stroke: #a01c1c; }
.vol-r { stroke: #b02020; shape-rendering: crispEdges; }
.vol-g { stroke: #40b050; shape-rendering: crispEdges; }
.vol-w { stroke: #eee; shape-rendering: crispEdges; }

.chart text { font-family: "Liberation Sans", "Noto Sans CJK SC", sans-serif; font-size: 12px; }
.up { fill: #a83030; }
.flat { fill: #eee; }
.down { fill: #3f9a44; }
.t-gray { fill: #b0b0b0; }
.t-white { fill: #e8e8e8; }
.t-khaki { fill: #b8ac50; }
.t-teal { fill: #3e9aa0; }
.t-purple { fill: #b040b0; }
.t-yellow { fill: #f0f070; }
.t-lime { fill: #3ed040; }
.t-cyan { fill: #40d0d0; }
.t-sky { fill: #3cc4d8; }
.t-red { fill: #b02424; }
.t-vol { fill: #b0b088; }
.t-time { fill: #a84040; }
.t-box { fill: #d8d8f0; }

.quote {
  width: 270px;
  flex: none;
  box-sizing: border-box;
  border-left: 1px solid #9a1c1c;
  display: flex;
  flex-direction: column;
}
.q-head {
  height: 28px;
  flex: none;
  box-sizing: border-box;
  border-bottom: 1px solid #9a1c1c;
  display: flex;
  align-items: center;
  padding-left: 38px;
}
.q-r { color: #c85050; font-weight: 700; font-size: 11px; margin-right: 4px; margin-top: -7px; }
.q-code { color: #e8e070; font-weight: 700; font-size: 14px; margin-right: 5px; }
.q-name { color: #50b8c0; font-size: 16px; }
.q-row {
  display: grid;
  grid-template-columns: 34px 95px 39px 95px;
  padding-left: 2px;
  height: 19px;
  line-height: 19px;
  font-size: 13px;
}
.q-row > :nth-child(3) { padding-left: 5px; box-sizing: border-box; }
.q-row b { text-align: right; font-weight: 700; letter-spacing: 0.5px; white-space: nowrap; }
.lbl { font-size: 16px; color: #b4b4b4; white-space: nowrap; font-weight: 400; }
.q-single { height: 20px; flex: none; line-height: 20px; box-sizing: border-box; border-bottom: 1px solid #9a1c1c; padding-left: 2px; }
.q-block { box-sizing: border-box; height: 97px; flex: none; padding-top: 1px; border-bottom: 1px solid #9a1c1c; }
.q-extra { height: 61px; padding-top: 1px; }
.q-title { height: 19px; flex: none; line-height: 19px; font-size: 12px; color: #a8a8a8; }
.red { color: #c81c1c; }
.yellow { color: #b4ac48; }
.white { color: #f0f0f0; }
.green { color: #20a828; }
.purple { color: #a020a8; }
.gray { color: #bdbdbd; }
.boxed { outline: 1px solid #4a4a4a; outline-offset: -1px; margin-left: 59px; }

.kchart { display: block; flex: none; }
.kchart text { font-family: "Liberation Sans", "Noto Sans CJK SC", sans-serif; }
.kdot { stroke: #7a1c1c; stroke-dasharray: 1 3; shape-rendering: crispEdges; }
.kwhite { stroke: #ddd; stroke-dasharray: 1 6; shape-rendering: crispEdges; }
.kmag { stroke: #a8285a; shape-rendering: crispEdges; }
.kgray { fill: #8a8a8a; }
.wick-h, .wick-s { stroke: #a01818; }
.wick-c { stroke: #c0ffff; }
.wick-g { stroke: #d8e8d8; }
.wick-m { stroke: #b02030; }
.kchart line { shape-rendering: crispEdges; }
.body-h { fill: #000; stroke: #a81818; shape-rendering: crispEdges; }
.body-s { fill: #b01010; stroke: #b01010; shape-rendering: crispEdges; }
.body-c { fill: #54f4f4; stroke: #54f4f4; shape-rendering: crispEdges; }
.body-g { fill: #50c070; stroke: #50c070; shape-rendering: crispEdges; }
.body-m { fill: #f010b0; stroke: #f010b0; shape-rendering: crispEdges; }
.tick { stroke: #f0e0a0; }
.k-purple { stroke: #c040c0; fill: none; stroke-width: 1; }
.k-yellow { stroke: #e8e070; fill: none; stroke-width: 1; }
.k-range { fill: #bdbdbd; font-size: 12px; }
.k-pink { fill: #c03070; font-size: 15px; }
.k-notice { fill: #f4f4f4; font-size: 12px; letter-spacing: 0.2px; }
.k-mark { fill: #b8b8b8; font-size: 20px; font-weight: 700; }
.k-mark-shadow { fill: #555; font-size: 20px; font-weight: 700; opacity: 0.7; }

.side {
  width: 24px;
  flex: none;
  background: #ecebe2;
  display: flex;
  flex-direction: column;
  align-items: center;
  color: #1c3c84;
}
.it { height: 23px; width: 100%; display: flex; align-items: center; justify-content: center; flex: none; }
.it.first { height: 21px; }
.it svg { display: block; }
.it.text { font-size: 13px; }
.it.pct { font-size: 13px; letter-spacing: -0.8px; color: #2a3a90; font-family: "Liberation Serif", serif; }
.sep { height: 8px; width: 18px; flex: none; position: relative; }
.sep::after { content: ""; position: absolute; left: 0; right: 0; top: 3px; border-top: 1px solid #c8c4b8; }
.arrow { fill: #fff; stroke: #3c7cb8; stroke-width: 1; }
.box { fill: #f2f6fa; stroke: #5a86b4; stroke-width: 1; }
.box-teal { stroke: #2a6878; }
.box-strong { stroke: #2a5a9a; fill: #fafcff; }
.ic-t { font-size: 10px; fill: #1c4a7c; font-family: "Liberation Sans", sans-serif; }
.ic-fx { font-size: 9px; fill: #1c3c5c; font-style: italic; font-family: "Liberation Serif", serif; }
.ic-cjk { font-size: 12px; fill: #e06a20; font-family: "Noto Sans CJK SC", sans-serif; font-weight: 700; }
</style>
